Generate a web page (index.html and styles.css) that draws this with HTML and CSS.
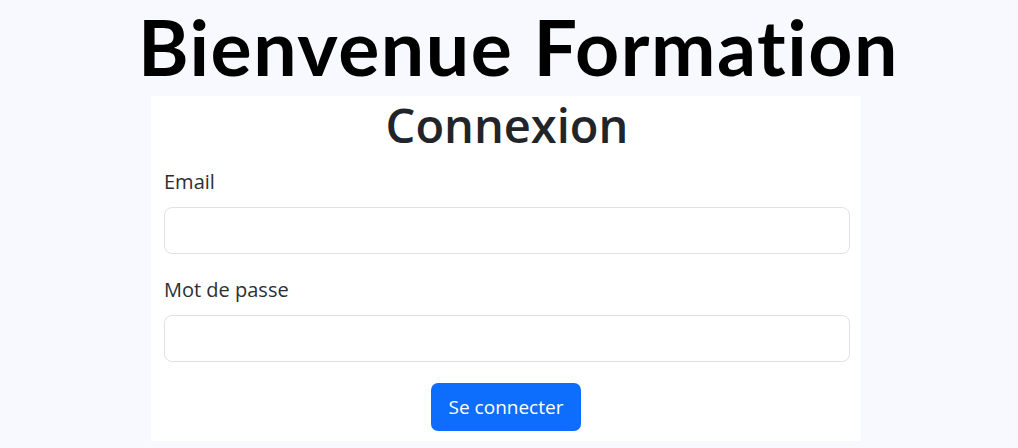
FILE: index.html
```html
<!DOCTYPE html>
<html lang="fr">
<head>
<meta charset="utf-8">
<title>Bienvenue Formation</title>
<link rel="stylesheet" href="styles.css">
</head>
<body>
<h1 class="site-title">Bienvenue Formation</h1>
<form class="card">
  <h2 class="card-title">Connexion</h2>
  <div class="field">
    <label class="field-label" for="email">Email</label>
    <input class="field-input" id="email" type="email">
  </div>
  <div class="field">
    <label class="field-label" for="pwd">Mot de passe</label>
    <input class="field-input" id="pwd" type="password">
  </div>
  <div class="actions">
    <button class="btn" type="button">Se connecter</button>
  </div>
</form>
</body>
</html>
```
FILE: styles.css
```css
html, body {
  margin: 0;
  padding: 0;
}
body {
  background: #f8f8ff;
  font-family: "Open Sans", "Noto Sans", sans-serif;
  color: #212529;
}
.site-title {
  margin: 0 0 4px 0;
  padding-left: 19px;
  font-family: Lato, "Open Sans", sans-serif;
  font-weight: 700;
  font-size: 77px;
  line-height: 92px;
  letter-spacing: 1.5px;
  font-variant-ligatures: none;
  text-align: center;
  color: #000;
}
.card {
  box-sizing: border-box;
  width: 710px;
  margin-left: 151px;
  background: #fff;
  padding: 1px 11px 10px 13px;
  display: flex;
  flex-direction: column;
}
.card-title {
  margin: 0 0 14px 0;
  font-size: 47px;
  font-weight: 600;
  line-height: 56px;
  text-align: center;
  color: #212529;
}
.field {
  display: flex;
  flex-direction: column;
  margin-bottom: 21px;
}
.field-label {
  font-size: 20px;
  line-height: 30px;
  margin-bottom: 10px;
  color: #2b2f33;
}
.field-input {
  box-sizing: border-box;
  height: 47px;
  border: 1px solid #dee2e6;
  border-radius: 8px;
  background: #fff;
  font-size: 20px;
  padding: 8px 16px;
}
.actions {
  display: flex;
  justify-content: center;
}
.btn {
  box-sizing: border-box;
  width: 150px;
  height: 48px;
  border: none;
  border-radius: 7px;
  background: #0d6efd;
  color: #fff;
  font-family: "Open Sans", sans-serif;
  font-size: 19px;
  margin-left: -2px;
}
```
